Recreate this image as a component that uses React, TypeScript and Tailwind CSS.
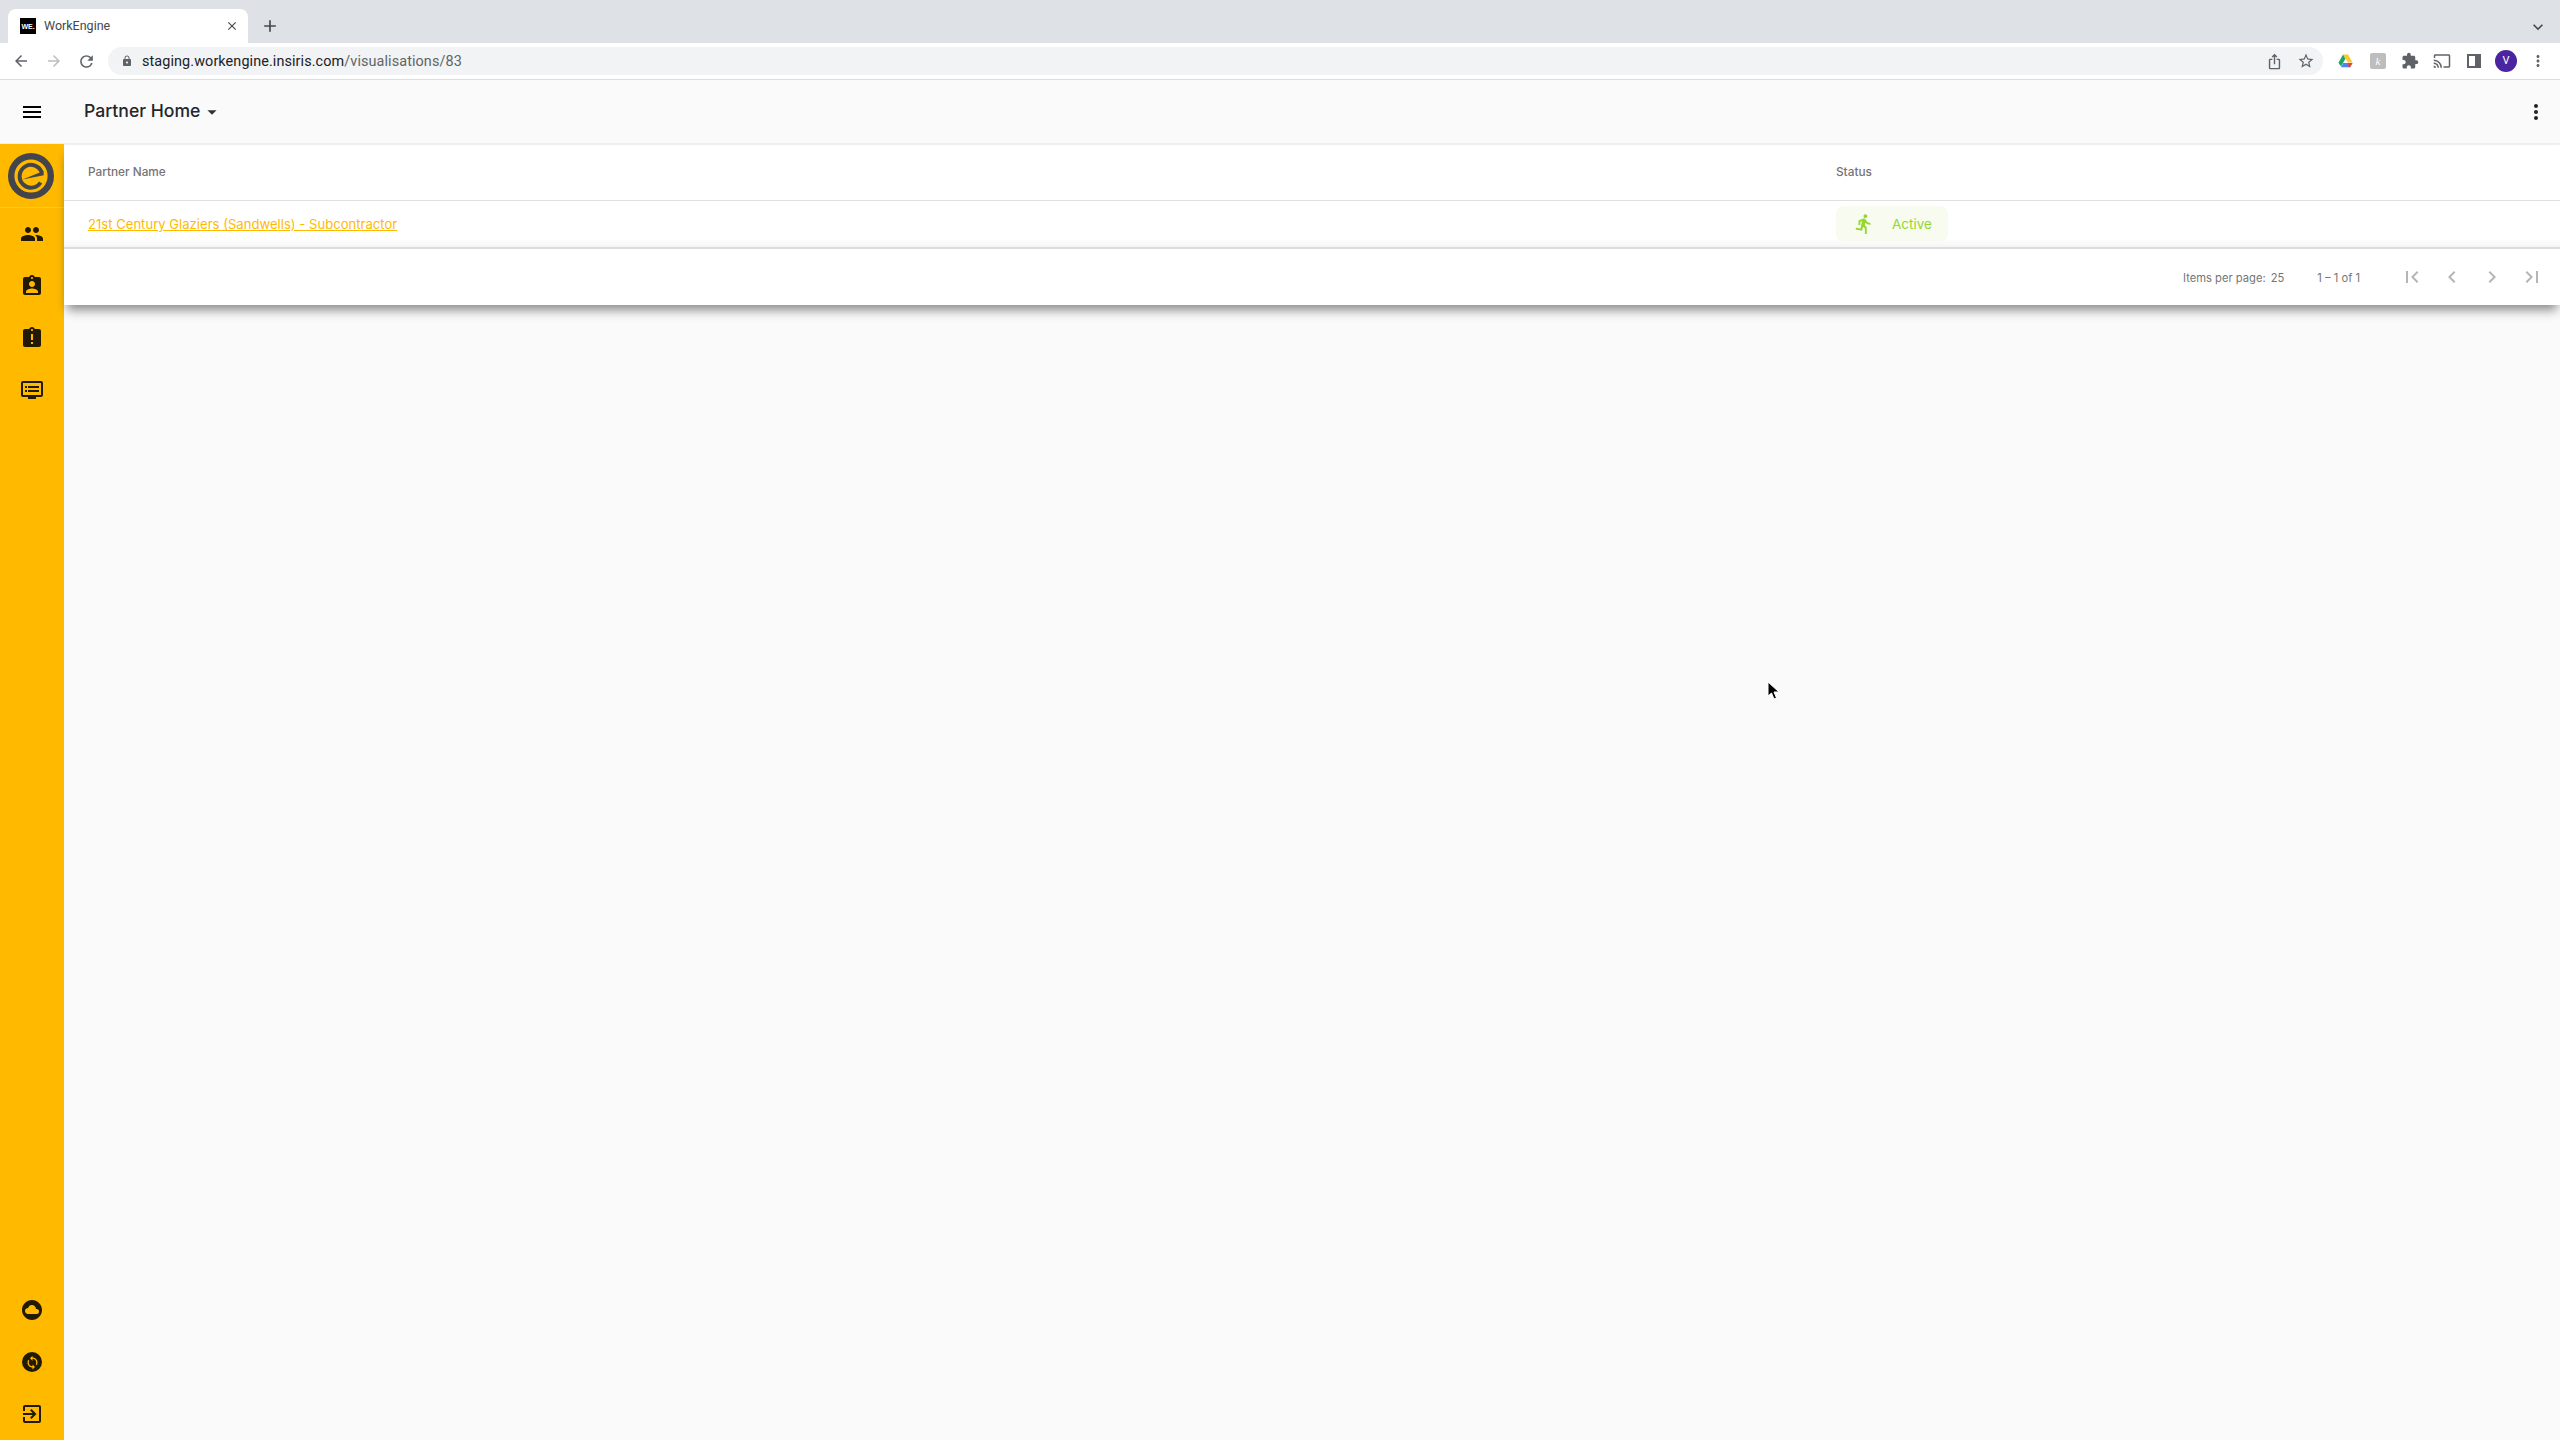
import React from "react";
import {
  MdMenu, MdMoreVert, MdArrowDropDown, MdPeople, MdAssignmentInd, MdAssignmentLate, MdDvr,
  MdCloudCircle, MdSync, MdExitToApp, MdFirstPage, MdLastPage, MdChevronLeft, MdChevronRight,
  MdDirectionsRun, MdArrowBack, MdArrowForward, MdRefresh, MdLock, MdClose, MdAdd,
  MdKeyboardArrowDown, MdIosShare, MdStarBorder, MdExtension, MdCast,
} from "react-icons/md";

const Logo = () => (
  <svg width="48" height="48" viewBox="0 0 48 48" className="block">
    <circle cx="24" cy="24" r="19.8" fill="none" stroke="#44444c" strokeWidth="6.4" />
    <path d="M34.8 20.5 A11.4 11.4 0 1 0 33.6 30.5" fill="none" stroke="#44444c" strokeWidth="4" />
    <polygon points="15.5,27.5 36.5,19 36.8,23.2" fill="#44444c" />
  </svg>
);

const Drive = () => (
  <svg width="15" height="14" viewBox="0 0 15 14">
    <path d="M5 0.5h5l4.5 8h-4.6z" fill="#ffc62e" />
    <path d="M5 0.5 7.4 4.7 3 12.6 0.5 8.8z" fill="#1fa463" />
    <path d="M3 13.2 5.2 9h9.3l-2.4 4.2z" fill="#4687f4" />
    <path d="M10 9h4.5L12 13.2 10.5 13.2z" fill="#e94335" />
  </svg>
);

const SyncCircle = () => (
  <div className="flex items-center justify-center w-[20px] h-[20px] rounded-full bg-[#221a05]">
    <MdSync size={15} color="#ffba00" />
  </div>
);

export default function App() {
  return (
    <div className="flex flex-col w-[2560px] h-[1440px] overflow-hidden bg-[#fafafa] font-['Inter',sans-serif]">
      {/* Tab strip */}
      <div className="flex items-end shrink-0 h-[43px] bg-[#dee1e6] font-['Roboto',sans-serif] relative">
        <div className="flex items-center ml-[8px] w-[240px] h-[34px] bg-white rounded-t-[8px] pl-[12px] pr-[9px]">
          <div className="flex items-center justify-center w-[16px] h-[16px] bg-black text-white text-[7px] font-bold leading-none font-['Liberation_Sans',sans-serif]">WE.</div>
          <span className="ml-[8px] flex-1 text-[12.5px] text-[#45484c]">WorkEngine</span>
          <MdClose size={14} color="#45484c" />
        </div>
        <div className="flex items-center h-[34px] ml-[12px]">
          <MdAdd size={20} color="#45484c" />
        </div>
        <div className="ml-auto mr-[12px] flex items-center h-[34px] pt-[2px]">
          <MdKeyboardArrowDown size={20} color="#45484c" />
        </div>
      </div>
      {/* Toolbar */}
      <div className="flex items-center shrink-0 h-[37px] bg-white border-b border-[#dadce0] pl-[12px] font-['Roboto',sans-serif]">
        <MdArrowBack size={18} color="#5f6368" />
        <MdArrowForward size={18} color="#bcbec1" className="ml-[15px]" />
        <MdRefresh size={19} color="#5f6368" className="ml-[14px]" />
        <div className="flex items-center ml-[12px] w-[2215px] h-[28px] rounded-full bg-[#f1f3f4] pl-[13px] pr-[8px]">
          <MdLock size={12} color="#5f6368" />
          <span className="ml-[9px] mt-[2px] text-[14.4px] text-[#202124] tracking-[0.1px]">staging.workengine.insiris.com<span className="text-[#5f6368]">/visualisations/83</span></span>
          <MdIosShare size={17} color="#5f6368" className="ml-auto" />
          <MdStarBorder size={18} color="#5f6368" className="ml-[14px]" />
        </div>
        <div className="flex items-center ml-[15px]"><Drive /></div>
        <div className="flex items-center justify-center ml-[17px] w-[16px] h-[16px] rounded-[2px] bg-[#bdbdbd] text-white text-[11px] leading-none font-['Liberation_Serif',serif] italic">k</div>
        <MdExtension size={18} color="#5f6368" className="ml-[15px]" />
        <MdCast size={18} color="#5f6368" className="ml-[14px]" />
        <div className="ml-[16px] flex w-[14px] h-[14px] border-2 border-[#5f6368] bg-white justify-end"><div className="w-[4px] bg-[#5f6368]" /></div>
        <div className="ml-[14px] flex items-center justify-center w-[22px] h-[22px] rounded-full bg-[#4b25a0] text-white text-[11px]">V</div>
        <MdMoreVert size={18} color="#5f6368" className="ml-[12px]" />
      </div>
      {/* App header */}
      <div className="flex items-center shrink-0 h-[64px] bg-[#fafafa] border-b border-[#efefef] pl-[20px] pr-[12px] pt-[1px]">
        <MdMenu size={24} color="#000" />
        <span className="ml-[40px] mb-[2px] text-[17.6px] font-medium text-[#26262a]">Partner Home</span>
        <MdArrowDropDown size={22} color="#333" className="ml-[1px] mb-[1px]" />
        <MdMoreVert size={24} color="#222" className="ml-auto" />
      </div>
      <div className="flex flex-1 min-h-0">
        {/* Sidebar */}
        <aside className="flex flex-col items-center w-[64px] shrink-0 bg-[#ffba00] text-[#221a05]">
          <div className="flex items-center justify-center w-full h-[64px] border-b border-[#ffc733] pr-[2px]"><Logo /></div>
          <div className="flex flex-col items-center gap-[28px] pt-[14px]">
            <MdPeople size={24} />
            <MdAssignmentInd size={24} />
            <MdAssignmentLate size={24} />
            <MdDvr size={24} />
          </div>
          <div className="flex flex-col items-center gap-[28px] mt-auto pb-[14px]">
            <MdCloudCircle size={24} />
            <div className="flex items-center justify-center w-[24px] h-[24px]"><SyncCircle /></div>
            <MdExitToApp size={24} />
          </div>
        </aside>
        {/* Main */}
        <main className="flex-1 min-w-0 border-t border-[#efefef]">
          <div className="bg-white shadow-[0_8px_10px_-3px_rgba(0,0,0,0.45)]">
            <div className="flex items-center h-[56px] border-b border-[#e0e0e0] pt-[1px] text-[11.8px] font-medium text-[#757575]">
              <div className="pl-[24px] w-[1772px]">Partner Name</div>
              <div>Status</div>
            </div>
            <div className="flex items-center h-[48px] border-b-2 border-[#dcdcdc] shadow-[inset_0_-10px_8px_-8px_rgba(0,0,0,0.06)]">
              <a className="ml-[24px] mt-[2px] w-[1748px] text-[13.1px] text-[#ffba00] underline">21st Century Glaziers (Sandwells) - Subcontractor</a>
              <div className="flex items-center w-[112px] h-[36px] rounded-[8px] bg-[#f7fbf0] pl-[17px] text-[13.5px] text-[#94d82a]">
                <MdDirectionsRun size={22} />
                <span className="ml-[17px] mt-[1px]">Active</span>
              </div>
            </div>
            <div className="flex items-center h-[56px] pr-[16px] text-[11.2px] text-[#767676]">
              <span className="ml-auto mt-[2px]">Items per page:</span>
              <span className="ml-[5px] mt-[2px]">25</span>
              <span className="ml-[33px] mt-[2px]">1 – 1 of 1</span>
              <div className="flex items-center ml-[40px] gap-[16px] text-[#b5b5b5]">
                <MdFirstPage size={24} />
                <MdChevronLeft size={24} />
                <MdChevronRight size={24} />
                <MdLastPage size={24} />
              </div>
            </div>
          </div>
        </main>
      </div>
      {/* Mouse cursor */}
      <svg width="14" height="20" viewBox="0 0 14 20" className="absolute left-[1767px] top-[681px]">
        <path d="M1 1 L1 15 L4.5 12 L7 18 L9.5 17 L7 11 L12 11 Z" fill="#000" stroke="#fff" strokeWidth="1" />
      </svg>
    </div>
  );
}
